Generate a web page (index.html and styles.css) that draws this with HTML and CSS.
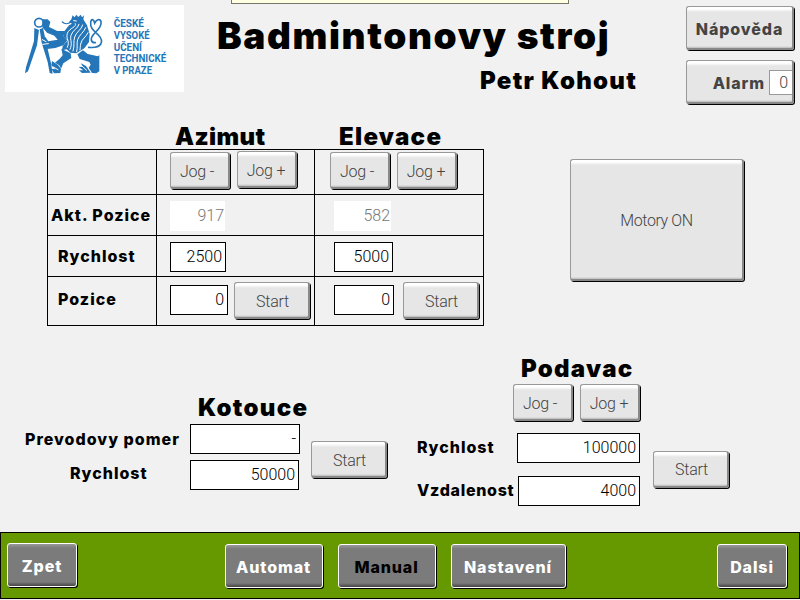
FILE: index.html
```html
<!DOCTYPE html>
<html lang="cs">
<head>
<meta charset="utf-8">
<title>Badmintonovy stroj</title>
<link rel="stylesheet" href="styles.css">
</head>
<body>
<div class="tooltip"></div>
<header class="header">
  <svg class="logo" viewBox="15 15 537 261">
    <rect x="15" y="15" width="537" height="261" fill="#fff"/>
    <g fill="#2576b8">
      <path d="M103 84 L117 90 L111 136 L84 214 L75 220 L78 202 L102 123 Z"/>
      <path d="M119 88 L129 84 L138 125 L153 190 L158 221 L149 219 L143 186 L125 128 Z"/>
      <path d="M127 58 L143 58 L151 66 L147 81 L172 93 L197 93 L190 108 L202 121 L190 136 L166 144 L142 147 L127 131 L128 113 L136 111 L145 124 L173 119 L163 107 L141 98 L127 82 Z"/>
      <path d="M218 46 L224 52 L229 44 L235 51 L242 44 L246 52 L252 46 L250 58 L261 76 L269 102 L267 126 L253 145 L229 160 L211 158 L200 148 L186 151 L188 139 L204 120 L190 110 L194 92 L207 76 L216 71 L207 66 L214 58 Z"/>
      <path d="M184 146 L212 160 L214 174 L190 190 L183 206 L178 196 L165 188 L179 176 L188 166 Z"/>
      <path d="M232 163 L249 151 L263 162 L294 169 L298 165 L298 214 L289 220 L276 219 L266 203 L272 194 L268 186 L239 177 Z"/>
      <path d="M156 183 L174 195 L183 207 L181 219 L162 220 L154 206 L166 208 L154 196 Z"/>
      <path d="M243 190 L258 198 L272 218 L246 219 L237 211 L250 211 L236 201 L248 200 Z"/>
    </g>
    <g fill="none" stroke="#2576b8" stroke-linecap="round">
      <circle cx="117" cy="68" r="13" stroke-width="5"/>
      <path stroke-width="4" d="M187 66 C194 73 205 72 213 66"/>
      <path stroke-width="5" d="M266 142 C306 146 313 124 295 105 C280 91 270 83 272 68 C273 54 281 57 284 69 C289 60 299 54 303 64 C306 78 295 88 281 103 C270 116 272 129 286 128"/>
    </g>
    <g fill="none" stroke="#fff" stroke-width="3" stroke-linecap="round">
      <path d="M226 71 C232 81 208 84 202 100 C197 119 211 121 202 142"/>
      <path d="M237 73 C234 86 217 91 213 106 C209 121 219 129 210 148"/>
      <path d="M248 75 C245 89 229 95 224 111 C219 127 225 134 219 153"/>
      <path d="M257 83 C251 98 238 104 233 119 C229 132 234 139 230 155"/>
      <path d="M264 98 C257 113 246 116 243 129 C240 139 241 146 240 150"/>
      <path d="M221 62 L229 63 M127 119 L138 125 M128 133 L145 131 M160 201 L174 209 M245 197 L260 211"/>
    </g>
    <g class="logo-text">
      <text x="341" y="81" textLength="91" lengthAdjust="spacingAndGlyphs">ČESKÉ</text>
      <text x="341" y="117" textLength="108" lengthAdjust="spacingAndGlyphs">VYSOKÉ</text>
      <text x="341" y="152" textLength="85" lengthAdjust="spacingAndGlyphs">UČENÍ</text>
      <text x="341" y="187" textLength="158" lengthAdjust="spacingAndGlyphs">TECHNICKÉ</text>
      <text x="341" y="222" textLength="115" lengthAdjust="spacingAndGlyphs">V PRAZE</text>
    </g>
  </svg>
  <div class="titles">
    <h1 class="title">Badmintonovy stroj</h1>
    <p class="author heading">Petr Kohout</p>
  </div>
  <div class="header-actions">
    <button class="btn btn-strong">Nápověda</button>
    <button class="btn btn-strong alarm">Alarm<span class="alarm-count">0</span></button>
  </div>
</header>

<main class="main">
  <section class="axes">
    <div class="axes-block">
      <div class="axes-heads">
        <h2 class="heading azimuth">Azimut</h2>
        <h2 class="heading">Elevace</h2>
      </div>
      <div class="table">
        <div class="cell"></div>
        <div class="cell jogs"><button class="btn jog">Jog -</button><button class="btn jog raised">Jog +</button></div>
        <div class="cell jogs wide"><button class="btn jog">Jog -</button><button class="btn jog">Jog +</button></div>

        <div class="cell name tight">Akt. Pozice</div>
        <div class="cell"><div class="field readout w55">917</div></div>
        <div class="cell elev"><div class="field readout w57">582</div></div>

        <div class="cell name">Rychlost</div>
        <div class="cell"><div class="field w56">2500</div></div>
        <div class="cell elev"><div class="field w59">5000</div></div>

        <div class="cell name last">Pozice</div>
        <div class="cell last"><div class="field w58">0</div><button class="btn start">Start</button></div>
        <div class="cell elev last"><div class="field w60">0</div><button class="btn start far">Start</button></div>
      </div>
    </div>
    <button class="btn motors">Motory ON</button>
  </section>

  <section class="units">
    <div class="discs">
      <h2 class="heading">Kotouce</h2>
      <div class="unit-row">
        <div class="discs-fields">
          <span class="label">Prevodovy pomer</span><div class="field w110">-</div>
          <span class="label center">Rychlost</span><div class="field w109">50000</div>
        </div>
        <button class="btn start">Start</button>
      </div>
    </div>
    <div class="feeder">
      <h2 class="heading">Podavac</h2>
      <div class="feeder-jogs"><button class="btn jog">Jog -</button><button class="btn jog">Jog +</button></div>
      <div class="unit-row">
        <div class="feeder-fields">
          <span class="label">Rychlost</span><div class="field w123">100000</div>
          <span class="label distance">Vzdalenost</span><div class="field w122">4000</div>
        </div>
        <button class="btn start">Start</button>
      </div>
    </div>
  </section>
</main>

<nav class="nav">
  <button class="nav-btn back">Zpet</button>
  <div class="nav-pages">
    <button class="nav-btn">Automat</button>
    <button class="nav-btn current">Manual</button>
    <button class="nav-btn settings">Nastavení</button>
  </div>
  <button class="nav-btn next">Dalsi</button>
</nav>
</body>
</html>
```
FILE: styles.css
```css
* { box-sizing: border-box; }

body {
  margin: 0;
  width: 800px;
  height: 600px;
  overflow: hidden;
  display: flex;
  flex-direction: column;
  background: #f1f1f1;
  color: #000;
  font-family: "Liberation Sans", sans-serif;
  font-size: 16px;
  position: relative;
}

h1, h2, p { margin: 0; white-space: nowrap; }

.tooltip {
  position: absolute;
  left: 231px;
  top: 0;
  width: 338px;
  height: 4px;
  background: #ffffe1;
  border: 1px solid #77776c;
  border-top: 0;
}

.header {
  height: 121px;
  display: flex;
  padding: 5px 5px 0;
}
.logo { width: 179px; height: 87px; flex: none; }
.logo-text {
  font: 700 30px Roboto, sans-serif;
  fill: #2576b8;
}
.titles { width: 502px; padding: 9px 0 0 33px; }

.title {
  font: 900 37px/44px Inter, sans-serif;
  letter-spacing: 1.6px;
}
.heading {
  font: 900 24px/28px Inter, sans-serif;
  letter-spacing: 1.3px;
}
.heading.azimuth { letter-spacing: 0.4px; }
.author { padding: 9px 0 0 263px; }

.header-actions {
  display: flex;
  flex-direction: column;
  gap: 10px;
  padding-top: 1px;
}

.btn {
  display: flex;
  align-items: center;
  justify-content: center;
  padding: 1px 0 0;
  border: 1px solid #999;
  border-right: 2px solid #888;
  border-bottom: 2px solid #888;
  border-radius: 3px;
  background: linear-gradient(#fff 0, #fff 2px, #e6e6e6 5px, #e6e6e6 calc(100% - 2px), #bbb 100%);
  box-shadow: 1px 1px 0 #000;
  color: #444;
  font: 300 16px Roboto, sans-serif;
  letter-spacing: -0.2px;
  white-space: nowrap;
  flex: none;
}
.btn-strong {
  width: 108px;
  height: 44px;
  padding-top: 2px;
  font: 800 16px Inter, sans-serif;
  letter-spacing: 0.9px;
}
.alarm { justify-content: flex-end; gap: 4px; }
.alarm-count {
  width: 23px;
  height: 25px;
  padding-right: 4px;
  margin-top: -1px;
  border: 1px solid #999;
  border-right: 0;
  background: #fff;
  font: 300 16px/23px Roboto, sans-serif;
  letter-spacing: 0;
  text-align: right;
}
.jog { width: 60px; height: 37px; padding: 2px 5px 0 0; }
.jog + .jog { margin-left: 7px; padding-right: 1px; }
.start { width: 76px; height: 37px; padding: 2px 0 0 2px; }

.main { height: 411px; }
.axes { display: flex; height: 231px; padding-left: 47px; }
.axes-heads {
  display: grid;
  grid-template-columns: 164px auto;
  height: 28px;
  padding: 2px 0 0 128px;
}

.table {
  display: grid;
  grid-template-columns: 109px 158px 170px;
  grid-template-rows: 45px 41px 41px 50px;
  width: 437px;
  border-right: 1px solid #000;
}
.cell {
  display: flex;
  padding: 6px 0 0 13px;
  border-top: 1px solid #000;
  border-left: 1px solid #000;
}
.cell.jogs { padding-top: 2px; }
.cell.jogs.wide { padding-left: 15px; }
.cell.elev { padding-left: 19px; }
.cell.last { padding-top: 8px; border-bottom: 1px solid #000; }
.raised { margin-top: -1px; }
.last .start { margin: -3px 0 0 6px; }
.last .start.far { margin-left: 9px; }

.cell.name, .label {
  font: 800 16px/28px Inter, sans-serif;
  letter-spacing: 1px;
  white-space: nowrap;
}
.cell.name { padding-left: 10px; }
.cell.name.tight { padding-left: 3px; }

.field {
  height: 30px;
  padding-right: 3px;
  border: 1px solid #000;
  background: #fff;
  font: 300 16px/28px Roboto, sans-serif;
  text-align: right;
  flex: none;
}
.readout { border-color: #fff; color: #777; padding-right: 0; }
.w55 { width: 55px; }
.w56 { width: 56px; }
.w57 { width: 57px; }
.w58 { width: 58px; }
.w59 { width: 59px; }
.w60 { width: 60px; }
.w109 { width: 109px; }
.w110 { width: 110px; }
.w122 { width: 122px; }
.w123 { width: 123px; }

.motors { width: 174px; height: 122px; margin: 38px 0 0 86px; padding-top: 2px; letter-spacing: -0.4px; }

.units { display: flex; height: 180px; }
.unit-row { display: flex; align-items: center; }
.discs { width: 417px; padding: 42px 0 0 25px; }
.discs .heading { padding-left: 173px; }
.discs-fields {
  display: grid;
  grid-template-columns: 165px 110px;
  row-gap: 6px;
  padding-top: 2px;
}
.discs .start { margin: 7px 0 0 11px; }
.label { padding-top: 1px; height: 30px; }
.label.center { padding-left: 45px; margin-top: -2px; }

.feeder { padding-top: 3px; }
.feeder .heading { padding-left: 104px; }
.feeder-jogs { display: flex; padding: 1px 0 0 96px; }
.feeder-fields {
  display: grid;
  grid-template-columns: 100px 123px;
  row-gap: 13px;
  padding-top: 12px;
}
.feeder-fields .label { padding-top: 0; }
.feeder-fields .distance { letter-spacing: 0.7px; }
.feeder-fields .field { justify-self: end; }
.feeder .start { margin: 11px 0 0 13px; }

.nav {
  height: 67px;
  display: flex;
  align-items: flex-start;
  justify-content: space-between;
  padding: 11px 12px 0 6px;
  border: 1px solid #000;
  background: #690;
}
.nav-pages { display: flex; gap: 15px; margin-right: 4px; }
.nav-btn {
  width: 98px;
  height: 44px;
  padding: 2px 0 0;
  border: 1px solid #fff;
  border-radius: 3px;
  background: linear-gradient(#999 0, #7b7b7b 4px, #7b7b7b calc(100% - 4px), #444 100%);
  box-shadow: 1px 1px 0 #000;
  color: #fff;
  font: 800 16px Inter, sans-serif;
  letter-spacing: 0.9px;
}
.nav-btn.back { width: 70px; margin-top: -1px; }
.nav-btn.next { width: 70px; }
.nav-btn.settings { width: 115px; }
.nav-btn.current { color: #000; }
```
